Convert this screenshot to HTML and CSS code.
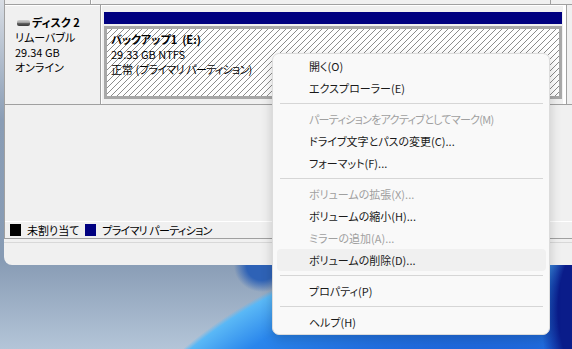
FILE: index.html
```html
<!DOCTYPE html>
<html lang="ja">
<head>
<meta charset="UTF-8">
<title>ディスクの管理</title>
<link rel="stylesheet" href="styles.css">
</head>
<body>

<div class="window">
    <div class="pane">
        <!-- 前のディスクの下端 -->
        <div class="disk-row prev">
            <div class="disk-label"></div>
            <div class="disk-parts"></div>
        </div>

        <!-- ディスク 2 -->
        <div class="disk-row">
            <div class="disk-label">
                <div class="disk-name"><span class="drive-icon"></span>ディスク 2</div>
                <div>リムーバブル</div>
                <div>29.34 GB</div>
                <div>オンライン</div>
            </div>
            <div class="disk-parts">
                <div class="part-bar"></div>
                <div class="part-box">
                    <div class="part-name">バックアップ1&nbsp; (E:)</div>
                    <div>29.33 GB NTFS</div>
                    <div>正常 (<span class="tight">プライマリ</span> <span class="tight">パーティション</span>)</div>
                </div>
            </div>
        </div>

        <div class="spacer"></div>

        <!-- 凡例 -->
        <div class="legend">
            <span class="swatch swatch-free"></span>
            <span>未割り当て</span>
            <span class="swatch swatch-primary"></span>
            <span><span class="tight">プライマリ</span> <span class="tight">パーティション</span></span>
        </div>
    </div>
    <div class="status"></div>
</div>

<!-- 右クリックメニュー -->
<ul class="menu">
    <li class="item">開く(O)</li>
    <li class="item">エクスプローラー(E)</li>
    <li class="sep"></li>
    <li class="item disabled tight">パーティションをアクティブとしてマーク(M)</li>
    <li class="item">ドライブ文字とパスの変更(C)...</li>
    <li class="item">フォーマット(F)...</li>
    <li class="sep"></li>
    <li class="item disabled">ボリュームの拡張(X)...</li>
    <li class="item">ボリュームの縮小(H)...</li>
    <li class="item disabled">ミラーの追加(A)...</li>
    <li class="item hover">ボリュームの削除(D)...</li>
    <li class="sep"></li>
    <li class="item">プロパティ(P)</li>
    <li class="sep"></li>
    <li class="item">ヘルプ(H)</li>
</ul>

</body>
</html>
```

FILE: styles.css
```css
/* デスクトップ */
body {
    margin: 0;
    height: 349px;
    overflow: hidden;
    position: relative;
    font-family: "Noto Sans CJK JP", sans-serif;
    font-size: 11px;
    font-feature-settings: "palt";
    color: #000;
    background:
        radial-gradient(ellipse 60px 110px at 600px 310px, #0a1c8a 0, #0a1c8a 70%, rgba(10, 28, 138, 0) 100%),
        radial-gradient(ellipse 28px 26px at 262px 266px, #2e62b6 0, #2e62b6 55%, rgba(46, 98, 182, 0) 100%),
        radial-gradient(circle at 480px 700px, #0d2a9e 0, #1650d0 300px, #2a86ec 420px, #5ab8f6 455px, rgba(140, 170, 205, 0) 460px),
        linear-gradient(180deg, #d8dde4 0, #8a9db5 120px, #879bb4 260px, #b4c5d8 349px);
}

.tight {
    letter-spacing: -0.7px;
}

.window {
    margin-left: 4px;
    width: 600px;
    height: 265px;
    background-color: #f0f0f0;
    border-radius: 0 0 8px 8px;
    overflow: hidden;
    display: flex;
    flex-direction: column;
}

.pane {
    height: 238px;
    border-left: 1px solid #a0a0a0;
    border-bottom: 1px solid #a0a0a0;
    display: flex;
    flex-direction: column;
}

.disk-row {
    display: flex;
    height: 99px;
    border-bottom: 1px solid #a0a0a0;
}

.disk-row.prev {
    height: 4px;
}

.disk-label {
    width: 85px;
    padding: 10px 0 0 10px;
    border-right: 1px solid #a0a0a0;
    line-height: 15px;
    box-shadow: inset 0 1px 0 #fff;
}

.disk-row.prev .disk-label {
    padding: 0;
    box-shadow: none;
}

.disk-name {
    font-weight: bold;
    display: flex;
    align-items: center;
}

.drive-icon {
    width: 13px;
    height: 6px;
    margin: 0 2px 0 2px;
    border-radius: 2px;
    background: linear-gradient(180deg, #d0d0d0 0, #a8a8a8 40%, #5a5a5a 60%, #3c3c3c 100%);
}

.disk-parts {
    width: 458px;
    padding: 7px 4px 0 2px;
    border-left: 1px solid #fff;
    border-right: 1px solid #a0a0a0;
    box-shadow: inset 0 1px 0 #fff, inset -3px 0 0 #fff;
}

.disk-row.prev .disk-parts {
    padding: 0;
    box-shadow: none;
}

.part-bar {
    height: 12px;
    background-color: #000080;
}

.part-box {
    height: 64px;
    margin-top: 2px;
    padding: 3px 4px 0;
    border: 3px solid #a8a8a8;
    line-height: 15px;
    color: #000;
    background: repeating-linear-gradient(135deg, #fff 0, #fff 3.3px, #8c8c8c 3.3px, #8c8c8c 4.24px);
}

.part-name {
    font-weight: bold;
}

.spacer {
    flex: 1;
}

.legend {
    height: 16px;
    border-top: 1px solid #fff;
    padding-left: 5px;
    display: flex;
    align-items: center;
    gap: 6px;
    line-height: 15px;
}

.swatch {
    width: 11px;
    height: 12px;
}

.swatch-free {
    background-color: #000;
}

.swatch-primary {
    background-color: #000080;
}

.status {
    flex: 1;
    margin-top: 3px;
    border-top: 1px solid #d8d8d8;
}

/* 右クリックメニュー */
.menu {
    position: absolute;
    left: 272px;
    top: 53px;
    width: 276px;
    margin: 0;
    padding: 1px 0;
    list-style: none;
    background-color: #f9f9f9;
    border: 1px solid #dcdcdc;
    border-radius: 7px;
    box-shadow: 0 4px 12px rgba(0, 0, 0, 0.18);
}

.item {
    height: 22px;
    line-height: 22px;
    margin: 0 3px 0 4px;
    padding-left: 32px;
    border-radius: 4px;
    color: #1a1a1a;
    white-space: nowrap;
}

.item.disabled {
    color: #a0a0a0;
}

.item.hover {
    background-color: #f0f0f0;
}

.sep {
    height: 1px;
    margin: 4px 6px 4px 7px;
    background-color: #d6d6d6;
}
```
